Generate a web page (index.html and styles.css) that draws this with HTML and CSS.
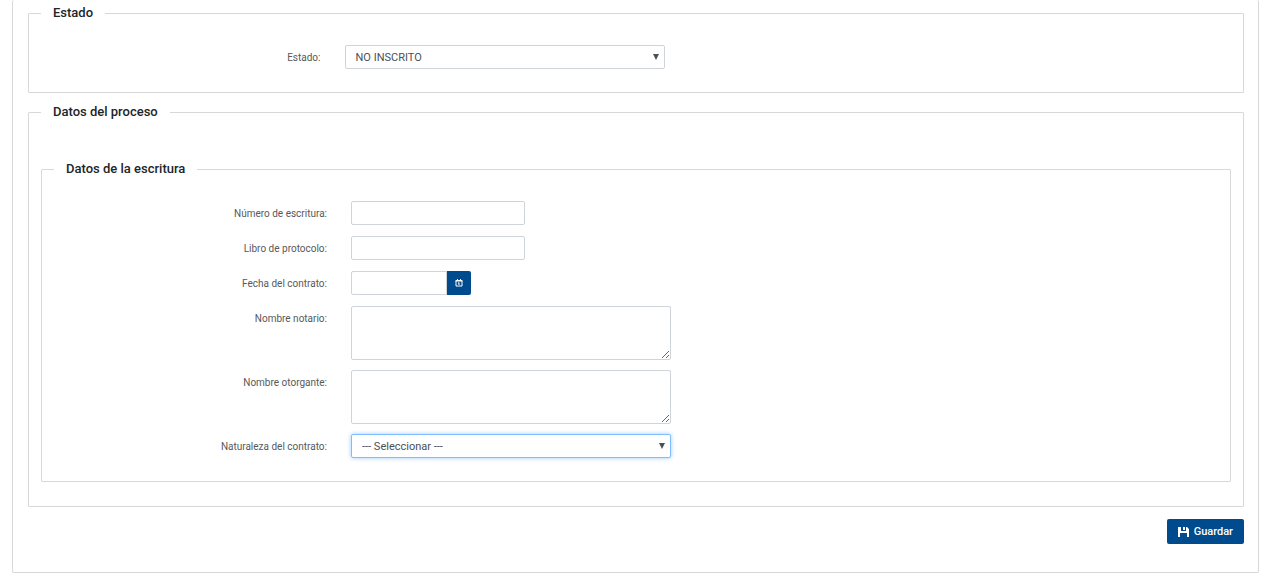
FILE: index.html
```html
<!DOCTYPE html>
<html lang="es">
<head>
  <meta charset="UTF-8" />
  <title>Datos de la escritura</title>
  <meta name="viewport" content="width=device-width, initial-scale=1.0" />
  <link rel="stylesheet" href="styles.css">
</head>
<body>
  <form class="panel">
    <fieldset>
      <legend>Estado</legend>
      <div class="form-row">
        <label for="estado">Estado:</label>
        <div class="field">
          <div class="select-box">
            <select id="estado" class="control">
              <option>NO INSCRITO</option>
            </select>
          </div>
        </div>
      </div>
    </fieldset>

    <fieldset class="process">
      <legend>Datos del proceso</legend>

      <fieldset>
        <legend>Datos de la escritura</legend>
        <div class="form-row">
          <label for="numero">Número de escritura:</label>
          <div class="field"><input type="text" id="numero" class="control short" /></div>
        </div>
        <div class="form-row">
          <label for="libro">Libro de protocolo:</label>
          <div class="field"><input type="text" id="libro" class="control short" /></div>
        </div>
        <div class="form-row">
          <label for="fecha">Fecha del contrato:</label>
          <div class="field date">
            <input type="text" id="fecha" class="control" />
            <button type="button" class="btn-date" aria-label="Calendario">
              <svg width="8" height="8" viewBox="0 0 8 8" fill="none" stroke="currentColor">
                <path d="M1 1.5h6v5.5h-6zM.5 2h7" />
                <path d="M2.5 0v2M5.5 0v2M4 3.5v2.5M3 4h1" />
              </svg>
            </button>
          </div>
        </div>
        <div class="form-row">
          <label for="notario">Nombre notario:</label>
          <div class="field"><textarea id="notario" class="control"></textarea></div>
        </div>
        <div class="form-row">
          <label for="otorgante">Nombre otorgante:</label>
          <div class="field"><textarea id="otorgante" class="control"></textarea></div>
        </div>
        <div class="form-row">
          <label for="naturaleza">Naturaleza del contrato:</label>
          <div class="field">
            <div class="select-box">
              <select id="naturaleza" class="control" autofocus>
                <option>--- Seleccionar ---</option>
              </select>
            </div>
          </div>
        </div>
      </fieldset>
    </fieldset>

    <div class="actions">
      <button type="submit" class="btn-primary">
        <svg width="11" height="10" viewBox="0 0 11 10" fill="currentColor">
          <path d="M0 0h3v4h5V0h1l2 2v8H9V6H2v4H0zM5 0h2v3H5z" />
        </svg>
        Guardar
      </button>
    </div>
  </form>
</body>
</html>
```
FILE: styles.css
```css
* {
  box-sizing: border-box;
}

body {
  margin: 0 22px 14px 12px;
  font-family: Roboto, sans-serif;
  font-size: 11px;
  color: #58595b;
  background: #fff;
}

.panel {
  padding: 3px 14px 28px 15px;
  border: 1px solid #d6d8da;
  border-top: none;
  border-radius: 2px;
}

fieldset {
  min-width: 0;
  margin: 0 0 9px;
  padding: 22px 12px;
  border: 1px solid #d6d8da;
  border-radius: 1px;
}

legend {
  padding: 0 12px;
  font-size: 13px;
  font-weight: 500;
  line-height: 20px;
  color: #212529;
}

.process {
  margin-bottom: 12px;
  padding: 37px 12px 24px;
}

.process fieldset {
  margin-bottom: 0;
}

.form-row {
  display: flex;
  align-items: flex-start;
}

.form-row + .form-row {
  margin-top: 10px;
}

label {
  width: 25%;
  padding-right: 18px;
  font-size: 10px;
  line-height: 25px;
  text-align: right;
}

.field {
  display: flex;
  flex: 1;
  padding-left: 6px;
}

.control {
  display: block;
  height: 24px;
  padding: 0 10px;
  font: inherit;
  color: #495057;
  background: #fff;
  border: 1px solid #ced4da;
  border-radius: 2px;
}

.control:focus {
  border-color: #80bdff;
  outline: 0;
  box-shadow: 0 0 4px rgba(0, 123, 255, 0.4);
}

.short {
  width: 174px;
}

.select-box {
  position: relative;
  width: 320px;
}

.select-box select {
  width: 100%;
  appearance: none;
}

/* drop-down arrow */
.select-box::after {
  content: "";
  position: absolute;
  top: 9px;
  right: 6px;
  border-top: 6px solid #495057;
  border-left: 3px solid transparent;
  border-right: 3px solid transparent;
  pointer-events: none;
}

textarea.control {
  width: 320px;
  height: 54px;
}

.date .control {
  width: 96px;
  border-radius: 2px 0 0 2px;
}

button {
  display: flex;
  align-items: center;
  justify-content: center;
  font: inherit;
  color: #fff;
  background: #004b8d;
  border: none;
  border-radius: 2px;
  cursor: pointer;
}

.btn-date {
  width: 24px;
  height: 24px;
  padding: 0;
  border-radius: 0 2px 2px 0;
}

.actions {
  display: flex;
  justify-content: flex-end;
}

.btn-primary {
  gap: 5px;
  height: 25px;
  padding: 0 11px;
  font-weight: 500;
}
```
